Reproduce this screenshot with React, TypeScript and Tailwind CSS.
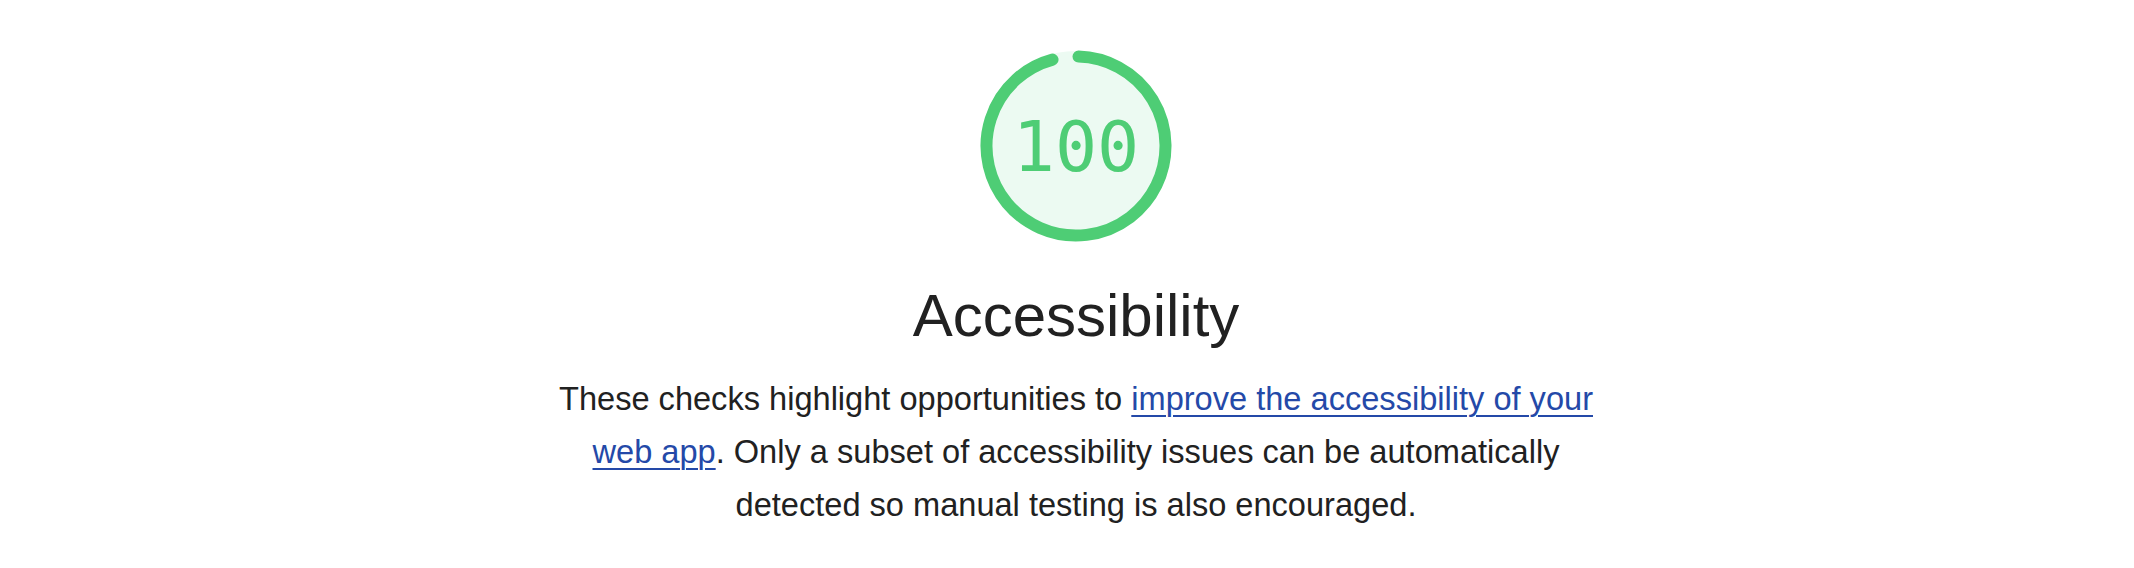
export default function App() {
  return (
    <div className="w-full min-h-[568px] bg-white pl-[18px] flex flex-col items-center" style={{ fontFamily: '"Liberation Sans", Arial, sans-serif' }}>
      <svg width="192" height="192" viewBox="0 0 192 192" className="mt-[50px] shrink-0">
        <circle cx="96" cy="96" r="95" fill="#ecfaf2" />
        <path
          d="M 98.5 6.53 A 89.5 89.5 0 1 1 72.53 9.63"
          fill="none"
          stroke="#4ecd75"
          strokeWidth="12"
          strokeLinecap="round"
        />
        <text
          x="96"
          y="121"
          textAnchor="middle"
          fill="#4ecd75"
          fontSize="70"
          style={{ fontFamily: '"DejaVu Sans Mono", "Liberation Mono", monospace' }}
        >
          100
        </text>
      </svg>
      <h1 className="mt-[40px] text-[60px] leading-[68px] text-[#212121] font-normal">Accessibility</h1>
      <p className="mt-[22px] w-[1070px] text-center text-[32.6px] leading-[53px] text-[#212121]">
        These checks highlight opportunities to{' '}
        <a href="#" className="text-[#2449a8] underline decoration-2 underline-offset-[5px]">
          improve the accessibility of your web app
        </a>
        . Only a subset of accessibility issues can be automatically detected so manual testing is also encouraged.
      </p>
    </div>
  );
}
